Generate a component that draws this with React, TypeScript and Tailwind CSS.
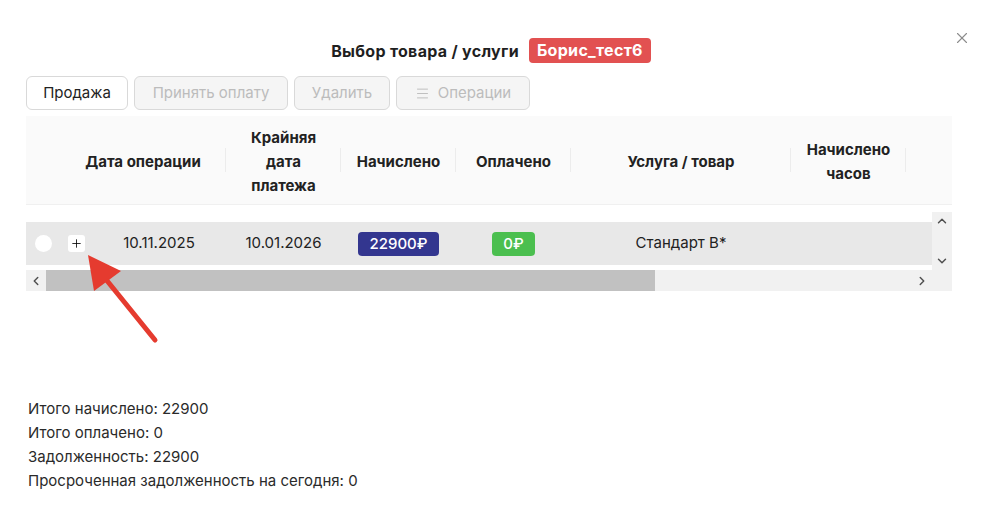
import { X, Menu, ChevronUp, ChevronDown, ChevronLeft, ChevronRight, Plus } from 'lucide-react'

const headerCols = [
  { w: 'w-[34px]', label: [] as string[], sep: false },
  { w: 'w-[166px]', label: ['Дата операции'], sep: true },
  { w: 'w-[115px]', label: ['Крайняя', 'дата', 'платежа'], sep: true },
  { w: 'w-[115px]', label: ['Начислено'], sep: true },
  { w: 'w-[115px]', label: ['Оплачено'], sep: true },
  { w: 'w-[220px]', label: ['Услуга / товар'], sep: true },
  { w: 'w-[115px]', label: ['Начислено', 'часов'], sep: true },
  { w: 'w-[26px]', label: [], sep: false },
]

const totals = [
  'Итого начислено: 22900',
  'Итого оплачено: 0',
  'Задолженность: 22900',
  'Просроченная задолженность на сегодня: 0',
]

export default function App() {
  return (
    <div
      className="relative h-[516px] w-[982px] overflow-hidden bg-white text-[15px] text-[#222]"
      style={{ fontFamily: 'Inter, "Noto Sans", sans-serif' }}
    >
      <button className="absolute right-[11px] top-[29px] text-[#8c8c8c]">
        <X size={18} strokeWidth={1.5} />
      </button>

      <div className="flex items-center justify-center gap-[10px] pt-[38px]">
        <span className="text-[16px] font-bold tracking-[0.3px] text-[#1f1f1f]">Выбор товара / услуги</span>
        <span className="rounded-[4px] bg-[#e25151] px-[8px] py-[2px] text-[16px] font-bold leading-[21px] tracking-[0.3px] text-white">
          Борис_тест6
        </span>
      </div>

      <div className="mt-[13px] flex gap-[6px] px-[26px]">
        <button className="h-[34px] w-[102px] rounded-[6px] border border-[#d9d9d9] bg-white text-[15px] text-[#222]">
          Продажа
        </button>
        <button className="h-[34px] w-[154px] rounded-[6px] border border-[#d9d9d9] bg-[#f5f5f5] text-[15px] text-[#bcbcbc]">
          Принять оплату
        </button>
        <button className="h-[34px] w-[96px] rounded-[6px] border border-[#d9d9d9] bg-[#f5f5f5] text-[15px] text-[#bcbcbc]">
          Удалить
        </button>
        <button className="flex h-[34px] w-[134px] items-center justify-center gap-[8px] rounded-[6px] border border-[#d9d9d9] bg-[#f5f5f5] text-[15px] text-[#bcbcbc]">
          <Menu size={15} strokeWidth={1.5} />
          Операции
        </button>
      </div>

      <div className="mx-[26px] mt-[6px] w-[926px]">
        <div className="flex h-[89px] border-b border-[#f0f0f0] bg-[#fafafa]">
          {headerCols.map((c, i) => (
            <div key={i} className={`${c.w} relative flex flex-col items-center justify-center pt-[3px] font-bold leading-[24px] text-[#222]`}>
              {c.label.map((l) => (
                <span key={l}>{l}</span>
              ))}
              {c.sep && <span className="absolute right-0 top-[32px] h-[24px] w-px bg-[#ececec]" />}
            </div>
          ))}
          <div className="w-[20px]" />
        </div>

        <div className="mt-[7px] flex">
          <div className="w-[906px] pb-[5px] pt-[10px]">
            <div className="flex h-[43px] items-center bg-[#e8e8e8]">
              <div className="flex w-[34px] justify-center">
                <span className="h-[17px] w-[17px] rounded-full bg-white" />
              </div>
              <div className="flex w-[32px] justify-center">
                <span className="flex h-[17px] w-[17px] items-center justify-center rounded-[3px] bg-white text-black">
                  <Plus size={13} strokeWidth={1.5} />
                </span>
              </div>
              <div className="w-[134px] text-center">10.11.2025</div>
              <div className="w-[115px] text-center">10.01.2026</div>
              <div className="flex w-[115px] justify-center">
                <span className="rounded-[4px] bg-[#33368f] px-[11px] font-medium leading-[24px] text-white">22900₽</span>
              </div>
              <div className="flex w-[115px] justify-center">
                <span className="rounded-[4px] bg-[#4bbf4f] px-[11px] font-medium leading-[24px] text-white">0₽</span>
              </div>
              <div className="w-[220px] text-center">Стандарт В*</div>
              <div className="w-[115px]" />
              <div className="w-[26px]" />
            </div>
          </div>
          <div className="flex w-[20px] flex-col items-center justify-between bg-[#f1f1f1] py-[2px] text-[#505050]">
            <ChevronUp size={14} strokeWidth={2.5} />
            <ChevronDown size={14} strokeWidth={2.5} />
          </div>
        </div>

        <div className="flex h-[21px]">
          <div className="flex w-[906px] items-center bg-[#f1f1f1] text-[#505050]">
            <div className="flex w-[20px] justify-center">
              <ChevronLeft size={14} strokeWidth={2.5} />
            </div>
            <div className="h-full w-[609px] bg-[#c1c1c1]" />
            <div className="flex-1" />
            <div className="flex w-[20px] justify-center">
              <ChevronRight size={14} strokeWidth={2.5} />
            </div>
          </div>
          <div className="w-[20px] bg-[#f1f1f1]" />
        </div>
      </div>

      <div className="mt-[106px] pl-[28px] leading-[24px] text-[#2a2a2a]">
        {totals.map((t) => (
          <div key={t}>{t}</div>
        ))}
      </div>

      <svg className="pointer-events-none absolute left-0 top-0" width="982" height="516">
        <line x1="155" y1="340" x2="100" y2="272" stroke="#e53b2f" strokeWidth="5" strokeLinecap="round" />
        <polygon points="88,255 121,271 94,291" fill="#e53b2f" />
      </svg>
    </div>
  )
}
